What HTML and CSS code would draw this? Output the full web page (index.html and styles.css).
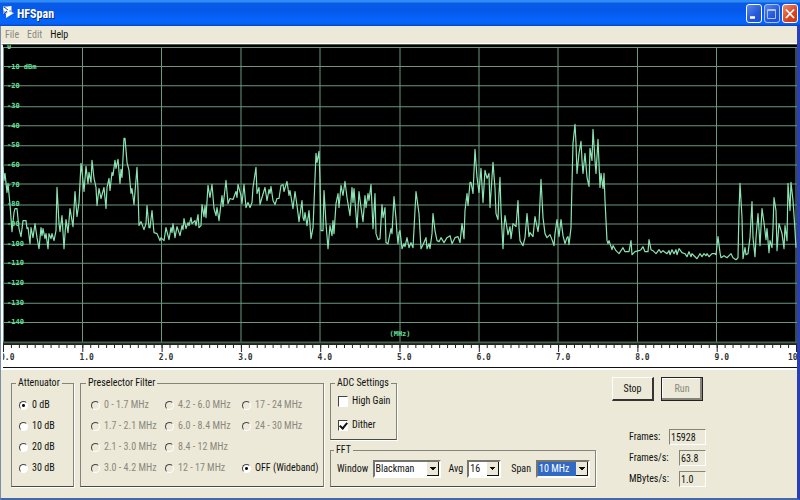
FILE: index.html
```html
<!DOCTYPE html>
<html lang="en">
<head>
<meta charset="utf-8">
<title>HFSpan</title>
<link rel="stylesheet" href="styles.css">
</head>
<body>
<div class="window">
  <header class="titlebar">
    <svg class="app-icon" viewBox="0 0 12 14" aria-hidden="true">
      <path d="M0 0h9v8H0z" fill="#7fa8e8"/>
      <path d="M0 2L8 0V4L5 5L11 7L3 12V8L5 6L1 5z" fill="#fff"/>
      <path d="M1 1l4 3M4 5l-3 3" fill="none" stroke="#2a4a9c"/>
    </svg>
    <h1 class="title">HFSpan</h1>
    <div class="window-buttons">
      <button class="wbtn" aria-label="Minimize"><svg viewBox="0 0 14 17"><path d="M3 12.500h5" stroke="#fff" stroke-width="2.500"/></svg></button>
      <button class="wbtn dim" aria-label="Maximize"><svg viewBox="0 0 14 17"><path d="M2.500 4.500h8v9h-8zM2.500 5.500h8" fill="none" stroke="#a9c3fa"/></svg></button>
      <button class="wbtn close" aria-label="Close"><svg viewBox="0 0 14 17"><path d="M3 4.500l8 8.500M11 4.500l-8 8.500" stroke="#fff" stroke-width="1.800"/></svg></button>
    </div>
  </header>
  <div class="client">
    <nav class="menu">
      <button disabled>File</button>
      <button disabled>Edit</button>
      <button>Help</button>
    </nav>
    <main class="spectrum">
      <div class="plot">
        <svg class="graph" viewBox="3 45 794 298" preserveAspectRatio="none" role="img" aria-label="Spectrum from 0 to 10 MHz">
          <g class="grid-lines">
            <path d="M3 47.500H797M3 66.500H797M3 85.500H797M3 106.500H797M3 125.500H797M3 145.500H797M3 164.500H797M3 183.500H797M3 204.500H797M3 223.500H797M3 243.500H797M3 262.500H797M3 282.500H797M3 302.500H797M3 321.500H797"/>
            <path d="M3.500 47V342M82.500 47V342M161.500 47V342M241 47V342M320 47V342M400 47V342M479 47V342M558 47V342M637.500 47V342M716.500 47V342M796 47V342"/>
          </g>
          <path class="baseline" d="M3 341.500H797"/>
          <polyline class="trace" points="3,166 4,180 5,173 7,192 8,183 10,204 12,231 14,212 15,208 17,208 19,228 21,236 23,220 26,220 27,228 28,227 30,243 31,227 33,237 35,223 37,237 39,248 41,227 42,235 43,228 45,238 46,233 48,248 49,233 51,238 52,233 54,240 56,230 57,187 59,223 60,231 62,215 64,248 66,219 68,232 70,208 73,226 75,191 77,216 79,202 81,163 83,180 84,191 86,166 88,183 89,172 91,182 92,160 94,178 96,187 97,205 99,188 101,198 104,187 106,208 107,187 109,178 110,190 112,172 113,175 115,160 116,168 118,159 120,183 121,169 122,177 124,138 125,138 126,150 127,162 129,170 131,193 132,188 134,204 137,167 138,190 139,225 141,221 144,229 146,223 147,205 149,227 150,227 152,210 154,232 157,233 160,240 161,237 164,240 166,227 169,239 171,227 172,232 173,223 175,237 177,226 180,235 182,225 183,229 184,218 186,228 188,222 189,225 191,217 192,223 195,220 196,225 198,214 199,227 201,225 202,204 204,216 205,205 206,217 208,185 210,197 212,184 214,208 216,215 217,207 219,220 222,195 223,206 226,180 228,203 230,198 233,199 236,191 237,197 238,184 241,195 242,203 244,184 246,207 248,202 250,207 252,202 253,187 256,167 257,193 259,187 260,204 262,197 265,187 267,200 269,189 270,193 271,186 273,200 275,204 277,198 279,198 281,185 283,184 284,191 287,181 289,195 290,190 293,208 295,191 297,205 299,221 302,200 303,217 304,220 305,212 307,225 309,210 311,238 313,227 314,203 316,153 317,162 319,151 320,180 321,230 323,230 324,190 326,223 328,248 330,225 332,235 333,220 334,233 336,203 338,193 339,207 341,185 343,195 345,181 347,197 350,215 352,187 353,202 354,188 357,227 359,191 361,207 363,221 365,195 366,207 368,193 369,200 371,184 373,228 375,193 376,233 378,239 380,238 382,204 383,217 385,207 386,242 388,243 391,228 392,233 394,196 396,218 397,233 398,243 399,232 400,230 402,248 404,243 405,246 407,237 409,247 411,242 413,247 415,210 416,191 419,213 421,248 423,244 426,237 427,248 429,243 430,248 432,233 433,213 435,230 437,240 439,241 441,237 444,242 447,237 450,235 452,243 455,237 458,236 460,242 462,223 464,238 465,210 467,193 468,205 470,182 471,182 473,193 475,149 477,177 479,192 481,168 483,202 485,170 487,178 489,173 490,207 493,162 495,188 496,213 498,219 499,193 500,177 501,210 503,248 504,227 505,215 508,234 510,226 511,238 513,223 516,226 518,200 519,227 520,240 523,245 525,237 527,213 529,236 530,232 533,236 535,216 538,231 539,223 541,179 543,217 545,233 547,237 550,234 552,239 554,245 555,233 557,219 559,236 561,219 563,235 565,243 567,237 568,236 569,244 571,227 572,183 573,143 575,124 576,143 577,173 579,153 581,141 582,160 583,173 585,153 587,177 589,186 590,148 592,160 593,129 595,160 596,173 598,139 600,187 601,173 603,188 604,173 605,200 607,240 608,243 609,240 612,249 613,245 616,250 619,253 623,247 625,251 629,251 631,240 632,254 635,251 639,250 641,249 643,246 645,251 648,251 649,239 651,249 653,250 656,253 659,249 661,252 663,250 667,253 669,250 670,254 672,249 674,253 676,249 677,254 679,248 682,252 685,253 687,256 689,251 691,256 692,253 694,255 697,258 700,253 702,256 704,253 706,255 707,253 709,256 712,253 715,253 716,254 718,236 720,252 721,257 724,255 727,257 731,253 733,257 736,259 738,257 739,210 740,183 742,217 743,258 745,247 746,254 748,253 750,237 752,201 753,237 755,256 756,237 758,213 760,245 762,208 764,222 766,239 767,228 769,252 770,240 772,247 773,227 774,197 776,210 777,250 779,223 782,233 784,248 785,225 787,240 788,183 790,210 791,182 793,200 795,230 796,247"/>
        </svg>
        <div class="levels">
          <span>0</span><span>-10 dBm</span><span>-20</span><span>-30</span><span>-40</span><span>-50</span><span>-60</span><span>-70</span><span>-80</span><span>-90</span><span>-100</span><span>-110</span><span>-120</span><span>-130</span><span>-140</span>
        </div>
        <span class="unit">(MHz)</span>
      </div>
      <div class="ruler">
        <svg class="ticks" viewBox="3 0 794 8" preserveAspectRatio="none" aria-hidden="true">
          <defs>
            <pattern id="minor" x="3" width="7.930" height="8" patternUnits="userSpaceOnUse"><path d="M.500 0V4" stroke="#222"/></pattern>
            <pattern id="major" x="3" width="79.300" height="8" patternUnits="userSpaceOnUse"><path d="M.500 0V8" stroke="#222"/></pattern>
          </defs>
          <rect x="3" width="794" height="8" fill="url(#minor)"/>
          <rect x="3" width="794" height="8" fill="url(#major)"/>
          <path d="M3 .500H797" stroke="#222"/>
        </svg>
        <div class="freqs">
          <span>0.0</span><span>1.0</span><span>2.0</span><span>3.0</span><span>4.0</span><span>5.0</span><span>6.0</span><span>7.0</span><span>8.0</span><span>9.0</span><span class="last">10.0</span>
        </div>
      </div>
    </main>
    <form class="panel">
      <fieldset class="group attenuator">
        <legend>Attenuator</legend>
        <label><input type="radio" name="att" checked>0 dB</label>
        <label><input type="radio" name="att">10 dB</label>
        <label><input type="radio" name="att">20 dB</label>
        <label><input type="radio" name="att">30 dB</label>
      </fieldset>
      <fieldset class="group preselector">
        <legend>Preselector Filter</legend>
        <label><input type="radio" name="pre" disabled>0 - 1.7 MHz</label>
        <label><input type="radio" name="pre" disabled>1.7 - 2.1 MHz</label>
        <label><input type="radio" name="pre" disabled>2.1 - 3.0 MHz</label>
        <label><input type="radio" name="pre" disabled>3.0 - 4.2 MHz</label>
        <label><input type="radio" name="pre" disabled>4.2 - 6.0 MHz</label>
        <label><input type="radio" name="pre" disabled>6.0 - 8.4 MHz</label>
        <label><input type="radio" name="pre" disabled>8.4 - 12 MHz</label>
        <label><input type="radio" name="pre" disabled>12 - 17 MHz</label>
        <label><input type="radio" name="pre" disabled>17 - 24 MHz</label>
        <label><input type="radio" name="pre" disabled>24 - 30 MHz</label>
        <label class="off"><input type="radio" name="pre" checked>OFF (Wideband)</label>
      </fieldset>
      <div class="settings">
        <fieldset class="group adc">
          <legend>ADC Settings</legend>
          <label><input type="checkbox">High Gain</label>
          <label><input type="checkbox" checked>Dither</label>
        </fieldset>
        <fieldset class="group fft">
          <legend>FFT</legend>
          <label for="win">Window</label>
          <select id="win" class="win"><option>Blackman</option></select>
          <label for="avg">Avg</label>
          <select id="avg" class="avg"><option>16</option></select>
          <label for="span">Span</label>
          <select id="span" class="span"><option>10 MHz</option></select>
        </fieldset>
      </div>
      <div class="status">
        <div class="actions">
          <button type="button" class="btn">Stop</button>
          <button type="button" class="btn default" disabled>Run</button>
        </div>
        <div class="readouts">
          <label for="frames">Frames:</label><input id="frames" class="wide" value="15928" readonly>
          <label for="fps">Frames/s:</label><input id="fps" value="63.8" readonly>
          <label for="mbs">MBytes/s:</label><input id="mbs" value="1.0" readonly>
        </div>
      </div>
    </form>
  </div>
</div>
</body>
</html>
```
FILE: styles.css
```css
* { box-sizing: border-box; }

body {
  margin: 0;
  background: #ece9d8;
  color: #111;
  font: 10px/12px "Roboto Condensed", "Noto Sans CJK SC", "Liberation Sans", sans-serif;
}

button, input, select { font: inherit; color: inherit; margin: 0; }

.window { display: flex; flex-direction: column; min-height: 100vh; }

/* Title bar */
.titlebar {
  display: flex;
  align-items: center;
  height: 26px;
  padding: 0 2px 0 3px;
  background: linear-gradient(#2f8cf5 0, #2f8cf5 2px, #0a5be6 3px, #0558e8 10px, #0565fb 20px, #0562f5 24px, #0a3fb8 26px);
}
.app-icon { width: 12px; height: 14px; }
.title {
  margin: 2px auto 0 2px;
  color: #fff;
  font-size: 12px;
  line-height: 14px;
  text-shadow: 1px 1px #0a2f86;
}
.window-buttons { display: flex; gap: 2px; }
.wbtn {
  width: 16px;
  height: 19px;
  padding: 0;
  border: 1px solid #fff;
  border-radius: 3px;
  background: linear-gradient(135deg, #5b87ee, #2457d8 60%, #1b4fd0);
}
.wbtn svg { display: block; width: 14px; height: 17px; }
.wbtn.dim { border-color: #a9c3fa; }
.wbtn.close { background: linear-gradient(135deg, #ee8a6c, #d9431f 60%, #c83a17); }

/* Window body */
.client {
  flex: 1;
  display: flex;
  flex-direction: column;
  border: solid #2a3fb5;
  border-width: 0 3px 2px 1px;
  border-left-color: #7c8cab;
  border-bottom-color: #4767a8;
}
.menu {
  display: flex;
  gap: 8px;
  height: 18px;
  padding: 1px 0 0 4px;
  border-bottom: 1px solid #fff;
  background: #ece9d8;
}
.menu button { border: 0; padding: 0; background: none; }
.menu button:disabled { color: #8a887c; }

/* Spectrum display */
.spectrum {
  flex: 1;
  display: flex;
  flex-direction: column;
  border-left: 2px solid #fff;
  border-top: 1px solid #555;
}
.plot { position: relative; flex: 1; min-height: 240px; background: #000; overflow: hidden; }
.graph { position: absolute; inset: 0; width: 100%; height: 100%; }
.grid-lines { fill: none; stroke: #6a9880; }
.baseline { stroke: #476350; stroke-width: 2; }
.trace { fill: none; stroke: #8ce4b3; stroke-width: 1.2; stroke-linejoin: round; }
.levels {
  position: absolute;
  inset: 2px auto 2px 4px;
  display: grid;
  grid-template-rows: repeat(15, 1fr);
  color: #62e098;
  font: bold 7px/1 "DejaVu Sans Mono", monospace;
}
.levels span { line-height: 0; }
.unit {
  position: absolute;
  left: 50%;
  bottom: 6px;
  transform: translateX(-50%);
  color: #62e098;
  font: bold 7px/8px "DejaVu Sans Mono", monospace;
}
.ruler { height: 24px; background: #fff; border-bottom: 1px solid #111; overflow: hidden; }
.ticks { display: block; width: 100%; height: 8px; }
.freqs {
  display: grid;
  grid-template-columns: repeat(10, 1fr) 0;
  font: bold 8px/12px "DejaVu Sans Mono", monospace;
  color: #333;
}
.freqs span { margin-left: -3px; }
.freqs .last { margin-left: -9px; }

/* Control panel */
.panel {
  display: flex;
  gap: 6px;
  padding: 7px 8px 11px 10px;
  border-top: 2px solid #fff;
  background: #ece9d8;
}
.group {
  min-width: 0;
  margin: 0;
  border: 1px solid #85847b;
  border-bottom-color: #4a4a46;
  box-shadow: 1px 1px #fff;
}
.group legend { padding: 0 2px; white-space: nowrap; }
.group label { display: flex; align-items: center; white-space: nowrap; }
.attenuator, .preselector { display: grid; grid-template-rows: repeat(4, 21px); align-content: center; }
.attenuator { width: 63px; padding: 0 7px 2px; }
.attenuator legend, .adc legend, .fft legend { margin-left: -3px; }
.preselector {
  grid-auto-flow: column;
  grid-template-columns: 74px 77px 80px;
  width: 244px;
  padding: 0 0 2px 10px;
}
.preselector legend { margin-left: -5px; }
.preselector label { color: #8a887c; }
.preselector .off { grid-row: 4; color: inherit; }

input[type="radio"], input[type="checkbox"] {
  appearance: none;
  flex: none;
  width: 9px;
  height: 9px;
  margin-right: 4px;
  border: 1px solid #fff;
  border-top-color: #444;
  border-left-color: #444;
  background: #fff;
}
input[type="radio"] { border-radius: 50%; }
input[type="radio"]:disabled { background: #ece9d8; }
input[type="radio"]:checked { background: radial-gradient(circle, #111 0 1px, #fff 2px); }
input[type="checkbox"] { display: grid; place-items: center; width: 10px; height: 11px; }
input[type="checkbox"]:checked::after {
  content: "";
  width: 3px;
  height: 6px;
  border: solid #111;
  border-width: 0 2px 2px 0;
  transform: rotate(40deg);
}

.settings { display: flex; flex-direction: column; width: 266px; gap: 4px; }
.adc { display: grid; grid-template-rows: 24px 24px; align-content: end; width: 67px; height: 63px; padding: 0 0 0 7px; }
.fft { display: flex; align-items: center; flex: 1; min-height: 43px; padding: 4px 5px 0 6px; }
.fft select {
  appearance: none;
  height: 18px;
  padding: 0 0 0 1px;
  border: 2px solid;
  border-color: #77756c #fff #fff #77756c;
  border-radius: 0;
  background:
    conic-gradient(from 315deg at 50% 100%, #111 90deg, transparent 0) right 3px top 5px / 6px 3px no-repeat,
    linear-gradient(#ece9d8, #ece9d8) right 1px top 0 / 11px 13px no-repeat,
    linear-gradient(#111, #111) right / 12px 14px no-repeat,
    #fff;
}
.fft .win { width: 68px; margin: 0 8px 0 auto; }
.fft .avg { width: 34px; margin: 0 10px 0 4px; }
.fft .span {
  width: 54px;
  margin-left: 5px;
  background-color: #316ac5;
  color: #fff;
}

.status { display: flex; flex-direction: column; justify-content: space-between; margin-left: 10px; }
.actions { display: flex; gap: 7px; }
.btn {
  width: 42px;
  height: 24px;
  padding: 0;
  border: 1px solid #fff;
  border-right: 2px solid #333;
  border-bottom: 2px solid #333;
  background: #ece9d8;
}
.btn.default { border: 1px solid #222; color: #8a887c; box-shadow: inset -2px -2px #85847b, inset 1px 1px #fff; }
.readouts {
  display: grid;
  grid-template-columns: auto auto;
  justify-content: space-between;
  align-items: center;
  row-gap: 5px;
  padding-left: 17px;
}
.readouts input {
  justify-self: end;
  width: 27px;
  height: 16px;
  padding: 0 0 0 1px;
  border: 1px solid;
  border-color: #85847b #fff #fff #85847b;
  background: #ece9d8;
}
.readouts .wide { width: 37px; }
```
